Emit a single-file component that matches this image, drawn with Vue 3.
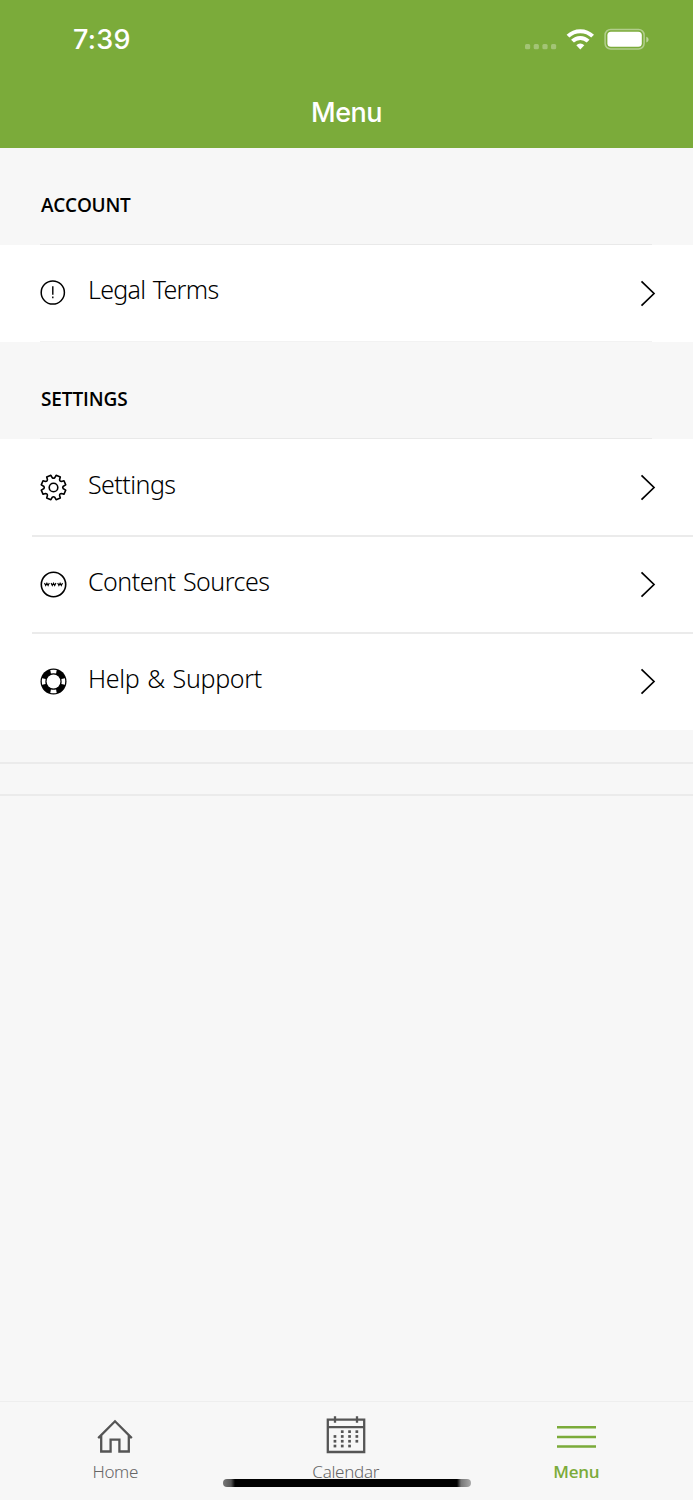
<script setup>
const groups = [
  { title: 'ACCOUNT', items: [{ label: 'Legal Terms', icon: 'info', cls: 'legal' }] },
  {
    title: 'SETTINGS',
    items: [
      { label: 'Settings', icon: 'gear', cls: 'general' },
      { label: 'Content Sources', icon: 'www', cls: 'sources' },
      { label: 'Help & Support', icon: 'buoy', cls: 'help' },
    ],
  },
]

const polar = (r, deg) => {
  const a = (deg * Math.PI) / 180
  return `${(14 + r * Math.sin(a)).toFixed(2)} ${(14 - r * Math.cos(a)).toFixed(2)}`
}

let gear = ''
for (let i = 0; i < 8; i++) {
  const c = 22.5 + i * 45
  gear += `${i ? 'L' : 'M'}${polar(10, c - 15)}L${polar(12.5, c - 10.5)}L${polar(12.5, c + 10.5)}L${polar(10, c + 15)}Q${polar(8.6, c + 22.5)} ${polar(10, c + 30)}`
}
gear += 'Z'

const dots = []
for (let r = 0; r < 4; r++)
  for (let c = 0; c < 4; c++)
    if (!(r === 0 && c === 0) && !(r === 3 && c === 3)) dots.push([7.6 + c * 7.3, 14.3 + r * 4.8])
</script>

<template>
  <main class="screen">
    <header class="top">
      <div class="status">
        <span class="time">7:39</span>
        <svg class="signals" width="126" height="26" viewBox="0 0 126 26">
          <g fill="#fff" fill-opacity=".3">
            <rect x="1" y="16" width="5.200" height="5.200" rx="1.500" />
            <rect x="9.700" y="16" width="5.200" height="5.200" rx="1.500" />
            <rect x="18.400" y="16" width="5.200" height="5.200" rx="1.500" />
            <rect x="27" y="16" width="5.200" height="5.200" rx="1.500" />
          </g>
          <g fill="none" stroke="#fff" stroke-width="4">
            <path d="M44 8.200a17.500 17.500 0 0 1 24.600 0" />
            <path d="M48.500 13.200a11 11 0 0 1 15.600 0" />
          </g>
          <path d="M52.300 17.200a5.700 5.700 0 0 1 8 0l-4 4.400z" fill="#fff" />
          <rect x="81.100" y="1.500" width="39" height="19.500" rx="5.500" fill="none" stroke="#fff" stroke-opacity=".42" stroke-width="1.500" />
          <rect x="83.400" y="3.800" width="34.400" height="15" rx="3.500" fill="#fff" />
          <path d="M122.300 8.700c3 1.200 3 4.600 0 5.800z" fill="#fff" fill-opacity=".5" />
        </svg>
      </div>
      <h1>Menu</h1>
    </header>

    <section v-for="g in groups" :key="g.title" class="group">
      <h2 :class="g.title.toLowerCase()"><span>{{ g.title }}</span></h2>
      <ul>
        <li v-for="item in g.items" :key="item.label">
          <svg v-if="item.icon === 'info'" class="icon" viewBox=".5 .5 28 28">
            <circle cx="13.300" cy="13" r="11.600" fill="none" stroke="#000" stroke-width="1.500" />
            <path d="M13.300 6.800v8.500M13.300 17v1.800" stroke="#000" stroke-width="1.400" />
          </svg>
          <svg v-else-if="item.icon === 'gear'" class="icon" viewBox=".5 .5 28 28" fill="none" stroke="#000" stroke-width="1.600" stroke-linejoin="round">
            <path :d="gear" />
            <circle cx="14" cy="14" r="4.300" />
          </svg>
          <svg v-else-if="item.icon === 'www'" class="icon" viewBox=".5 .5 28 28" fill="none" stroke="#000">
            <circle cx="14" cy="14" r="12.200" stroke-width="1.600" />
            <path d="M5 12.500l1.200 2.600 1.200-2.400 1.200 2.400 1.200-2.600M11.600 12.500l1.200 2.600 1.200-2.400 1.200 2.400 1.200-2.600M18.200 12.500l1.200 2.600 1.200-2.400 1.200 2.400 1.200-2.600" stroke-width="1.100" />
          </svg>
          <svg v-else class="icon" viewBox=".5 .5 28 28">
            <circle cx="14" cy="14" r="13" />
            <circle cx="14" cy="14" r="6.900" fill="#fff" />
            <path d="M10.800 2.600q3.200-.8 6.400 0l-.6 3.500q-2.600-.5-5.200 0zM10.800 25.400q3.200.8 6.400 0l-.6-3.500q-2.600.5-5.200 0zM2.600 10.800q-.8 3.200 0 6.400l3.500-.6q-.5-2.600 0-5.200zM25.400 10.800q.8 3.200 0 6.400l-3.500-.6q.5-2.600 0-5.200z" fill="#fff" />
          </svg>
          <span class="label" :class="item.cls">{{ item.label }}</span>
          <svg class="chevron" width="18" height="28" viewBox="0 0 18 28">
            <path d="M1.500 1.300L14 13.500 1.500 25.700" fill="none" stroke="#000" stroke-width="1.700" />
          </svg>
        </li>
      </ul>
    </section>

    <div class="spacer"></div>
    <div class="spacer second"></div>

    <nav>
      <a class="home">
        <svg width="40" height="40" viewBox="0 0 40 40" fill="none" stroke="#555" stroke-width="2.300">
          <path d="M3.200 22.100L20 5.300l16.800 16.800M6.200 19.800v15.700h9.400V23.600h8.800v11.900h9.400V19.800" />
        </svg>
        <span>Home</span>
      </a>
      <a class="calendar">
        <svg width="40" height="40" viewBox="0 0 40 40">
          <path d="M1.800 3.700h36.400v32.300H1.800zM1.800 11.200h36.400M9 .2v6.500M31 .2v6.500" fill="none" stroke="#555" stroke-width="2.300" />
          <rect v-for="(d, i) in dots" :key="i" :x="d[0]" :y="d[1]" width="2.700" height="2.700" fill="#555" />
        </svg>
        <span>Calendar</span>
      </a>
      <a class="menu">
        <svg width="40" height="40" viewBox="0 0 40 40">
          <path d="M1 11.300h39M1 20.900h39M1 30.600h39" stroke="#7bab3a" stroke-width="2.500" />
        </svg>
        <span>Menu</span>
      </a>
      <div class="indicator"></div>
    </nav>
  </main>
</template>

<style>
body { margin: 0; background: #f7f7f7; }
</style>

<style scoped>
.screen { width: 693px; height: 1500px; display: flex; flex-direction: column; background: #f7f7f7; font-family: "Noto Sans", "Open Sans", sans-serif; color: #000; overflow: hidden; }
.top { height: 148px; flex: none; background: #7bab3a; color: #fff; font-family: Inter, sans-serif; }
.status { height: 80px; display: flex; justify-content: space-between; align-items: center; padding: 0 43px 0 73px; }
.signals { margin-top: 1px; }
.time { font-size: 27px; font-weight: 550; line-height: 30px; letter-spacing: .3px; }
h1 { margin: 0; font-size: 27px; line-height: 34px; padding-top: 16px; font-weight: 550; text-align: center; letter-spacing: -.5px; }
.group { flex: none; }
h2 { margin: 0; height: 97px; box-sizing: border-box; padding: 43px 41px 0; font-family: "Open Sans", sans-serif; font-size: 19px; line-height: 28px; font-weight: 600; background: linear-gradient(#e9e9e9, #e9e9e9) 40px 95.500px / 612px 1.500px no-repeat; }
h2.account { letter-spacing: -.25px; }
h2.settings { letter-spacing: -.1px; }
ul { list-style: none; margin: 0; padding: 0; background: #fff; }
li { height: 97px; display: flex; align-items: center; padding: 0 35px 0 39.500px; box-sizing: border-box; }
li + li { background: linear-gradient(#ebebeb, #ebebeb) 32px 0 / 661px 1px no-repeat; }
li:not(:last-child) { background: linear-gradient(#ebebeb, #ebebeb) 32px 100% / 661px 1px no-repeat; }
li:nth-child(2) { background: linear-gradient(#ebebeb, #ebebeb) 32px 0 / 661px 1px no-repeat, linear-gradient(#ebebeb, #ebebeb) 32px 100% / 661px 1px no-repeat; }
.group:nth-of-type(1) ul { background: linear-gradient(#f2f2f2, #f2f2f2) 40px 100% / 612px 1px no-repeat #fff; }
.icon { width: 28px; height: 28px; flex: none; margin-right: 20.500px; }
.label { flex: 1; font-size: 25px; line-height: 36px; font-weight: 300; padding-bottom: 8px; white-space: nowrap; }
.legal { letter-spacing: -.7px; word-spacing: 1.500px; padding-bottom: 9px; }
.general { letter-spacing: -.55px; }
.sources { letter-spacing: -.5px; word-spacing: 1.500px; }
.help { letter-spacing: -.3px; word-spacing: 1.500px; }
.spacer { flex: none; height: 32px; border-bottom: 2px solid #ebebeb; }
.second { height: 30px; }
nav { margin-top: auto; height: 99px; box-sizing: border-box; border-top: 1px solid #eee; display: grid; grid-template-columns: repeat(3, 230.500px); position: relative; flex: none; }
nav a { display: flex; flex-direction: column; align-items: center; padding-top: 14px; font-size: 17px; line-height: 22px; color: #666; font-weight: 300; }
nav a span { margin-top: 5px; letter-spacing: -.3px; }
nav .menu { color: #7bab3a; font-family: "Open Sans", sans-serif; font-weight: 600; }
.indicator { position: absolute; left: 223px; top: 77px; width: 248px; height: 8px; border-radius: 4px; background: linear-gradient(90deg, #777, #555 8px, #000 12px, #000 234px, #777 238px, #aaa); }
</style>
